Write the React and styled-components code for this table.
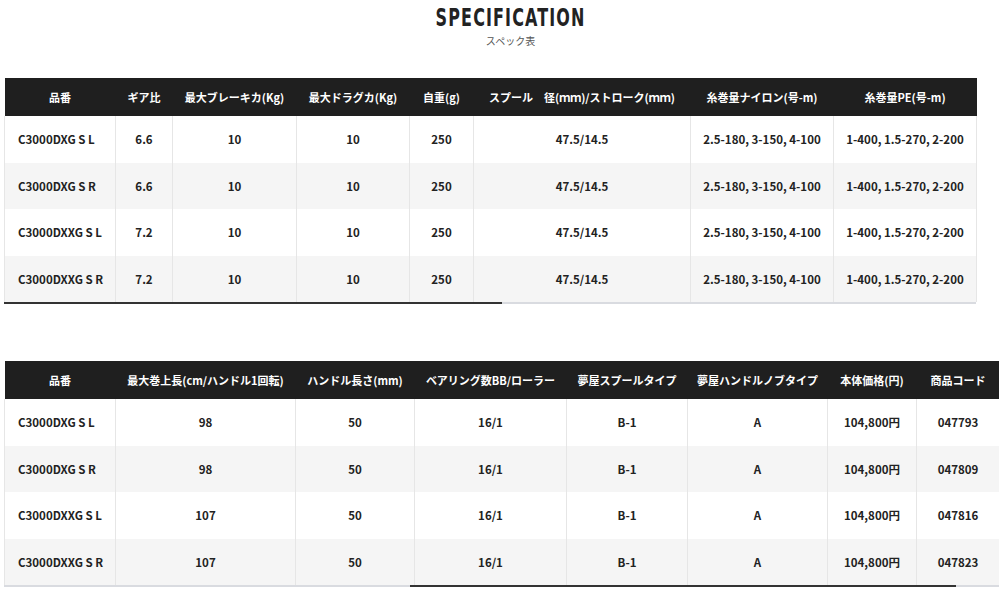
import React from "react";
import styled, { createGlobalStyle } from "styled-components";

const Global = createGlobalStyle`
  html, body { margin: 0; padding: 0; background: #fff; }
  body { font-family: "Noto Sans CJK JP", "Noto Sans", sans-serif; color: #222; }
`;

const Page = styled.div`
  width: 999px;
  overflow: hidden;
  padding: 0 0 0 4px;
  box-sizing: border-box;
`;

const Heading = styled.header`
  display: flex;
  flex-direction: column;
  align-items: center;
  padding: 4px 0 0 18px;
  height: 75px;
  box-sizing: border-box;
`;

const Title = styled.h2`
  margin: 0;
  font-family: "Liberation Sans Narrow", "DejaVu Sans Condensed", "Liberation Sans", sans-serif;
  font-stretch: condensed;
  font-weight: 700;
  font-size: 25px;
  line-height: 28px;
  letter-spacing: 1.6px;
  color: #222;
  transform: scaleX(0.71);
`;

const Sub = styled.div`
  margin-top: 2px;
  font-size: 10px;
  line-height: 14px;
  color: #555;
`;

const Block = styled.section`
  margin-top: ${(p) => p.$top}px;
  width: ${(p) => p.$width}px;
`;

const Table = styled.table`
  border-collapse: collapse;
  table-layout: fixed;
  width: ${(p) => p.$width}px;
  font-size: 11.5px;
  font-weight: 700;
`;

const HeadCell = styled.th`
  background: #1f1f1f;
  color: #fff;
  height: 38px;
  padding: 0;
  font-weight: 700;
  font-size: 11px;
  text-align: center;
  white-space: nowrap;
  overflow: hidden;
`;

const Row = styled.tr`
  background: ${(p) => (p.$alt ? "#f5f5f5" : "#fff")};
`;

const Cell = styled.td`
  height: 46.5px;
  padding: 0;
  padding-left: ${(p) => (p.$first ? "13px" : "0")};
  text-align: ${(p) => (p.$first ? "left" : "center")};
  border-left: 1px solid #e6e6e6;
  border-right: 1px solid #e6e6e6;
  color: #222;
  white-space: nowrap;
  box-sizing: border-box;
`;

const Track = styled.div`
  display: flex;
  height: 2px;
  width: ${(p) => p.$width}px;
  background: #d9dbe0;
`;

const Thumb = styled.div`
  margin-left: ${(p) => p.$left}px;
  width: ${(p) => p.$size}px;
  height: 2px;
  background: #333;
`;

function SpecTable({ widths, heads, rows, tableWidth, thumbLeft, thumbSize, top }) {
  return (
    <Block $top={top} $width={tableWidth}>
      <Table $width={tableWidth}>
        <colgroup>
          {widths.map((w, i) => (
            <col key={i} style={{ width: w }} />
          ))}
        </colgroup>
        <thead>
          <tr>
            {heads.map((h) => (
              <HeadCell key={h}>{h}</HeadCell>
            ))}
          </tr>
        </thead>
        <tbody>
          {rows.map((r, i) => (
            <Row key={i} $alt={i % 2 === 1}>
              {r.map((c, j) => (
                <Cell key={j} $first={j === 0}>
                  {c}
                </Cell>
              ))}
            </Row>
          ))}
        </tbody>
      </Table>
      <Track $width={tableWidth}>
        <Thumb $left={thumbLeft} $size={thumbSize} />
      </Track>
    </Block>
  );
}

const heads1 = [
  "品番",
  "ギア比",
  "最大ブレーキカ(Kg)",
  "最大ドラグカ(Kg)",
  "自重(g)",
  "スプール　径(ｍｍ)/ストローク(ｍｍ)",
  "糸巻量ナイロン(号-m)",
  "糸巻量PE(号-m)",
];
const rows1 = [
  ["C3000DXG S L", "6.6", "10", "10", "250", "47.5/14.5", "2.5-180, 3-150, 4-100", "1-400, 1.5-270, 2-200"],
  ["C3000DXG S R", "6.6", "10", "10", "250", "47.5/14.5", "2.5-180, 3-150, 4-100", "1-400, 1.5-270, 2-200"],
  ["C3000DXXG S L", "7.2", "10", "10", "250", "47.5/14.5", "2.5-180, 3-150, 4-100", "1-400, 1.5-270, 2-200"],
  ["C3000DXXG S R", "7.2", "10", "10", "250", "47.5/14.5", "2.5-180, 3-150, 4-100", "1-400, 1.5-270, 2-200"],
];

const heads2 = [
  "品番",
  "最大巻上長(cm/ハンドル1回転)",
  "ハンドル長さ(mm)",
  "ベアリング数BB/ローラー",
  "夢屋スプールタイプ",
  "夢屋ハンドルノブタイプ",
  "本体価格(円)",
  "商品コード",
];
const rows2 = [
  ["C3000DXG S L", "98", "50", "16/1", "B-1", "A", "104,800円", "047793"],
  ["C3000DXG S R", "98", "50", "16/1", "B-1", "A", "104,800円", "047809"],
  ["C3000DXXG S L", "107", "50", "16/1", "B-1", "A", "104,800円", "047816"],
  ["C3000DXXG S R", "107", "50", "16/1", "B-1", "A", "104,800円", "047823"],
];

export default function App() {
  return (
    <>
      <Global />
      <Page>
        <Heading>
          <Title>SPECIFICATION</Title>
          <Sub>スペック表</Sub>
        </Heading>
        <SpecTable
          top={3}
          widths={[111, 57, 124, 113, 64, 217, 143, 143]}
          heads={heads1}
          rows={rows1}
          tableWidth={972}
          thumbLeft={0}
          thumbSize={498}
        />
        <SpecTable
          top={57}
          widths={[111, 180, 119, 152, 121, 140, 89, 83]}
          heads={heads2}
          rows={rows2}
          tableWidth={995}
          thumbLeft={406}
          thumbSize={546}
        />
      </Page>
    </>
  );
}
